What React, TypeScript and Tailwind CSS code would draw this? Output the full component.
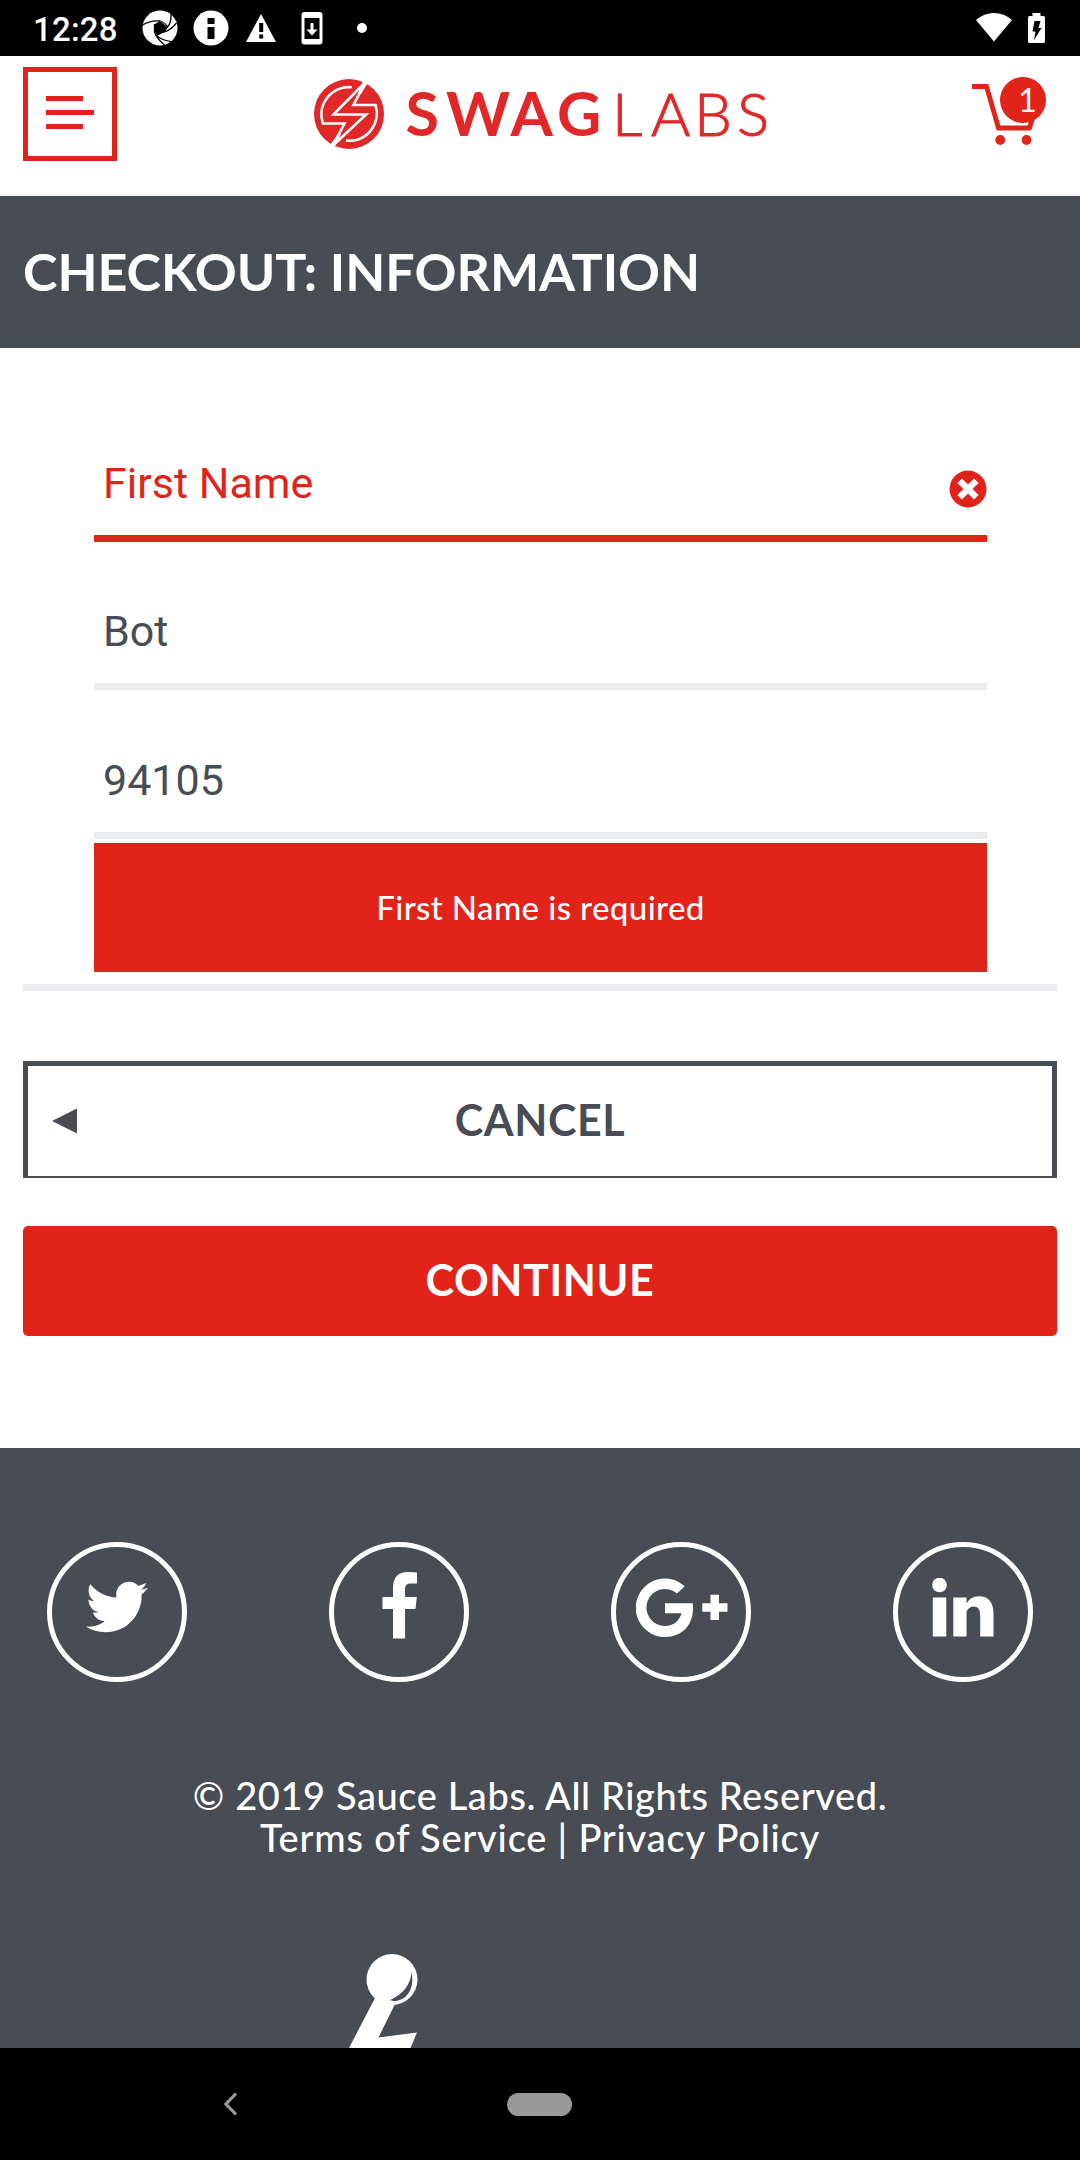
import type { ReactNode } from "react";
import { FaTwitter } from "react-icons/fa";

const lato = "font-['Lato','Noto_Sans',sans-serif]";
const roboto = "font-['Roboto','Noto_Sans',sans-serif]";

function StatusBar() {
  return (
    <div className="flex h-[56px] items-center bg-black pl-[33px] pr-[35px] text-white">
      <span className={`${roboto} mt-[3px] w-[109px] whitespace-nowrap text-[33px] font-medium leading-none tracking-[0.200px]`}>
        12:28
      </span>
      <svg className="h-[36px] w-[36px]" viewBox="0 0 36 36">
        <circle cx="18" cy="18" r="17.500" fill="#fff" />
        <path d="M13 14 L18 11 L25.500 17 L22.500 22 L15 26 L12.500 21 Z" fill="#000" />
        <g fill="none" stroke="#000" strokeWidth="1.300">
          <path d="M0 15.500 Q8 10 18 11" />
          <path d="M18 11 Q24 13 25.500 17 Q29.500 13 29 3" />
          <path d="M25 16.500 L22.500 22 Q29 20 34.500 13" />
          <path d="M15 26 Q22 32 36 32" />
          <path d="M12.500 14 L12.500 22 Q15 29 22.500 35" />
        </g>
      </svg>
      <svg className="ml-[15px] h-[36px] w-[36px]" viewBox="0 0 36 36">
        <circle cx="18" cy="18" r="17.500" fill="#fff" />
        <path d="M14.500 8h7v6h-7zM14.500 17h7v12h-7z" fill="#000" />
      </svg>
      <svg className="ml-[16px] h-[36px] w-[32px]" viewBox="0 0 32 36">
        <path d="M16 4 L31 32 H1 Z" fill="#fff" />
        <path d="M14.200 13h4v9h-4zM14.200 24.500h4v4h-4z" fill="#000" />
      </svg>
      <svg className="ml-[24px] h-[36px] w-[22px]" viewBox="0 0 22 36">
        <rect x="0.500" y="2" width="21" height="32.500" rx="3" fill="#fff" />
        <rect x="3.500" y="8" width="15" height="21" fill="#000" />
        <path d="M9.500 13h3v6.500h4l-5.500 6 -5.500-6h4z" fill="#fff" />
      </svg>
      <span className="ml-[34px] h-[10px] w-[10px] rounded-full bg-white" />
      <svg className="ml-auto h-[30px] w-[36px]" viewBox="0 0 36 30">
        <path d="M0 7 Q8 0 18 0 Q28 0 36 7 L18 28.500 Z" fill="#fff" />
      </svg>
      <svg className="ml-[16px] h-[30px] w-[17px]" viewBox="0 0 17 30">
        <path d="M4.500 0h8v3h3q1.500 0 1.500 1.500v24q0 1.500-1.500 1.500h-14q-1.500 0-1.500-1.500v-24q0-1.500 1.500-1.500h3z" fill="#fff" />
        <path d="M6.500 8h6l-2 7h3l-7.500 12 1.500-8.500h-3z" fill="#000" />
      </svg>
    </div>
  );
}

function Logo() {
  return (
    <svg className="h-[80px] w-[460px]" viewBox="310 74 460 80">
      <circle cx="349" cy="114" r="35" fill="#e22729" />
      <g fill="none" stroke="#fff" strokeWidth="2.600">
        <path d="M351.800 87.300 A27.500 27.500 0 0 0 322.800 123.500 L344.500 123.500 L332.500 146" />
        <path d="M365.500 82 L353.500 105 L375.500 105 A27.500 27.500 0 0 1 346 140.600" />
        <path d="M365.500 82 L333.500 114.500 L366 114.500 L332.500 146" />
      </g>
      <path d="M363.500 80 L368 82.500 L361 94 L358 94 Z" fill="#fff" />
      <path d="M330 145 L334 147.500 L341 134 L338 134 Z" fill="#fff" />
      <g fill="#e22729" className={lato}>
        <text x="405.500 446 510.500 557" y="136" fontSize="61" fontWeight="700">SWAG</text>
        <text x="612 651 694 737" y="136" fontSize="60" fontWeight="300" stroke="#e22729" strokeWidth="1">LABS</text>
      </g>
    </svg>
  );
}

function Header() {
  return (
    <header className="flex h-[140px] items-start border-b border-[#e6eaea] bg-white pl-[23px] pr-[34px]">
      <button className="mt-[11px] flex h-[94px] w-[94px] flex-col gap-[9px] border-[5px] border-[#e2231a] pl-[18px] pt-[24px]" aria-label="Menu">
        <span className="h-[5px] w-[37px] bg-[#e2231a]" />
        <span className="h-[5px] w-[48px] bg-[#e2231a]" />
        <span className="h-[5px] w-[37px] bg-[#e2231a]" />
      </button>
      <div className="ml-[193px] mt-[18px]">
        <Logo />
      </div>
      <div className="relative ml-auto mt-[21px] h-[70px] w-[74px]">
        <svg className="h-[70px] w-[74px]" viewBox="0 0 74 70">
          <path d="M0 9.500 H14.500 L26.500 51 H57.500 L64 30" fill="none" stroke="#e2231a" strokeWidth="4.800" />
          <circle cx="28.200" cy="63" r="4.900" fill="#e2231a" />
          <circle cx="54.500" cy="63" r="4.900" fill="#e2231a" />
        </svg>
        <span className={`${lato} absolute right-0 top-0 flex h-[46px] w-[46px] items-center justify-center rounded-full bg-[#e2231a] pl-[9px] text-[32px] leading-none text-white`}>
          1
        </span>
      </div>
    </header>
  );
}

function Field({ value, error, className = "" }: { value: string; error?: boolean; className?: string }) {
  return (
    <div
      className={`${roboto} ${className} flex items-center justify-between border-b-[7px] pl-[9px] text-[43px] leading-none ${
        error ? "border-[#e2231a] text-[#e2231a]" : "border-[#ebecee] text-[#474c55]"
      }`}
    >
      <span className="whitespace-nowrap">{value}</span>
      {error && (
        <svg className="mt-[11px] h-[38px] w-[38px]" viewBox="0 0 38 38">
          <circle cx="19" cy="19" r="18.500" fill="#e2231a" />
          <path
            d="M13 13 L25 25 M25 13 L13 25"
            stroke="#fff"
            strokeWidth="6.500"
            strokeLinecap="square"
          />
        </svg>
      )}
    </div>
  );
}

function SocialCircle({ children }: { children: ReactNode }) {
  return (
    <div className="flex h-[140px] w-[140px] items-start justify-center rounded-full border-[5px] border-white text-white">
      {children}
    </div>
  );
}

export default function App() {
  return (
    <div className="flex h-[2160px] w-[1080px] flex-col overflow-hidden bg-white">
      <StatusBar />
      <Header />
      <div className="flex h-[152px] items-center bg-[#474c55] pl-[23px]">
        <h1 className={`${lato} -mt-[3px] whitespace-nowrap text-[52px] font-bold leading-none text-white`}>
          CHECKOUT: INFORMATION
        </h1>
      </div>

      <main className="h-[1100px] bg-white">
        <div className="mx-[94px] w-[893px] pt-[46px]">
          <Field value="First Name" error className="h-[148px] pt-[37px]" />
          <Field value="Bot" className="h-[148px] pt-[37px]" />
          <Field value="94105" className="h-[149px] pt-[39px]" />
          <div className="mt-[4px] flex h-[129px] items-center justify-center bg-[#e2231a]">
            <span className={`${lato} whitespace-nowrap text-[33px] font-medium leading-none tracking-[0.400px] text-white`}>
              First Name is required
            </span>
          </div>
        </div>
        <div className="mx-[23px] mt-[12px] h-[7px] bg-[#ebecee]" />
        <button className="relative mx-[23px] mt-[70px] flex h-[117px] w-[1034px] items-center justify-center border-x-[5px] border-b-2 border-t-[5px] border-[#474c55]">
          <svg className="absolute left-[24px] top-[42px] h-[26px] w-[26px]" viewBox="0 0 26 26">
            <path d="M0 13 L25 0.500 V25.500 Z" fill="#474c55" />
          </svg>
          <span className={`${lato} -mt-[4px] whitespace-nowrap text-[43px] font-bold leading-none tracking-[0.600px] text-[#474c55]`}>
            CANCEL
          </span>
        </button>
        <button className="mx-[23px] mt-[48px] flex h-[110px] w-[1034px] items-center justify-center rounded-[5px] bg-[#e2231a]">
          <span className={`${lato} -mt-[4px] whitespace-nowrap text-[43px] font-bold leading-none tracking-[0.600px] text-white`}>
            CONTINUE
          </span>
        </button>
      </main>

      <footer className="flex h-[600px] flex-col overflow-hidden bg-[#474c55]">
        <div className="mx-[47px] mt-[94px] flex justify-between">
          <SocialCircle>
            <FaTwitter className="mt-[29px] h-[62px] w-[62px]" />
          </SocialCircle>
          <SocialCircle>
            <svg className="ml-[1px] mt-[25px] h-[67px] w-[36px]" viewBox="0 0 36 67">
              <path d="M35 0.500V11.500H28.500Q23 11.500 23 17V25H34.800L33.500 37H23V66.500H11V37H0.500V25H11V16Q11 0 26 0Q32 0 35 0.500Z" fill="#fff" />
            </svg>
          </SocialCircle>
          <SocialCircle>
            <svg className="ml-[2px] mt-[31px] h-[60px] w-[92px]" viewBox="0 0 92 60">
              <path d="M29 25.200V35.200H45.500C43.500 42.500 37.500 48 29.200 48A18.500 18.500 0 1 1 41 15.500L48.700 8.300A29.200 29.200 0 1 0 29 59C46 59 57 47 57 30.500Q57 27.500 56.700 25.200Z" fill="#fff" />
              <path d="M74.500 16.800h8.500v8.400h8.500v8.500h-8.500v8.400h-8.500v-8.400h-8.200v-8.500h8.200z" fill="#fff" />
            </svg>
          </SocialCircle>
          <SocialCircle>
            <svg className="mt-[31px] h-[59px] w-[62px]" viewBox="0 0 62 59">
              <circle cx="7.500" cy="7" r="7.300" fill="#fff" />
              <path d="M0.800 19.500H14.300V58.500H0.800ZM21.300 19.500H34.500V25.200Q39 18.300 46.500 18.300Q61.500 18.300 61.500 36V58.500H48.200V37Q48.200 28.500 41.800 28.500Q36.500 28.500 34.500 34V58.500H21.300Z" fill="#fff" />
            </svg>
          </SocialCircle>
        </div>
        <div className={`${lato} mt-[92px] text-center text-[38px] font-medium leading-[42px] text-white`}>
          <p className="whitespace-nowrap tracking-[0.600px]">© 2019 Sauce Labs. All Rights Reserved.</p>
          <p className="whitespace-nowrap tracking-[0.800px]">Terms of Service | Privacy Policy</p>
        </div>
        <svg className="ml-[320px] mt-[72px] h-[118px] w-[130px] shrink-0" viewBox="0 0 130 118" fill="none">
          <circle cx="72" cy="49.500" r="25.500" fill="#fff" />
          <path d="M91.500 42 Q90 61 70 70 Q76 73 84 68 Q95 59 91.500 42Z" fill="#474c55" />
          <path d="M55 68 L29 118 H90.500 L97 102.500 L58.500 107.500 L75 74Z" fill="#fff" />
        </svg>
      </footer>

      <nav className="flex h-[112px] items-center bg-black">
        <svg className="ml-[223px] h-[24px] w-[16px]" viewBox="0 0 16 24">
          <path d="M13 1.500 L3 12 L13 22.500" fill="none" stroke="#999" strokeWidth="3.200" />
        </svg>
        <span className="ml-[268px] h-[23px] w-[65px] rounded-full bg-[#999]" />
      </nav>
    </div>
  );
}
